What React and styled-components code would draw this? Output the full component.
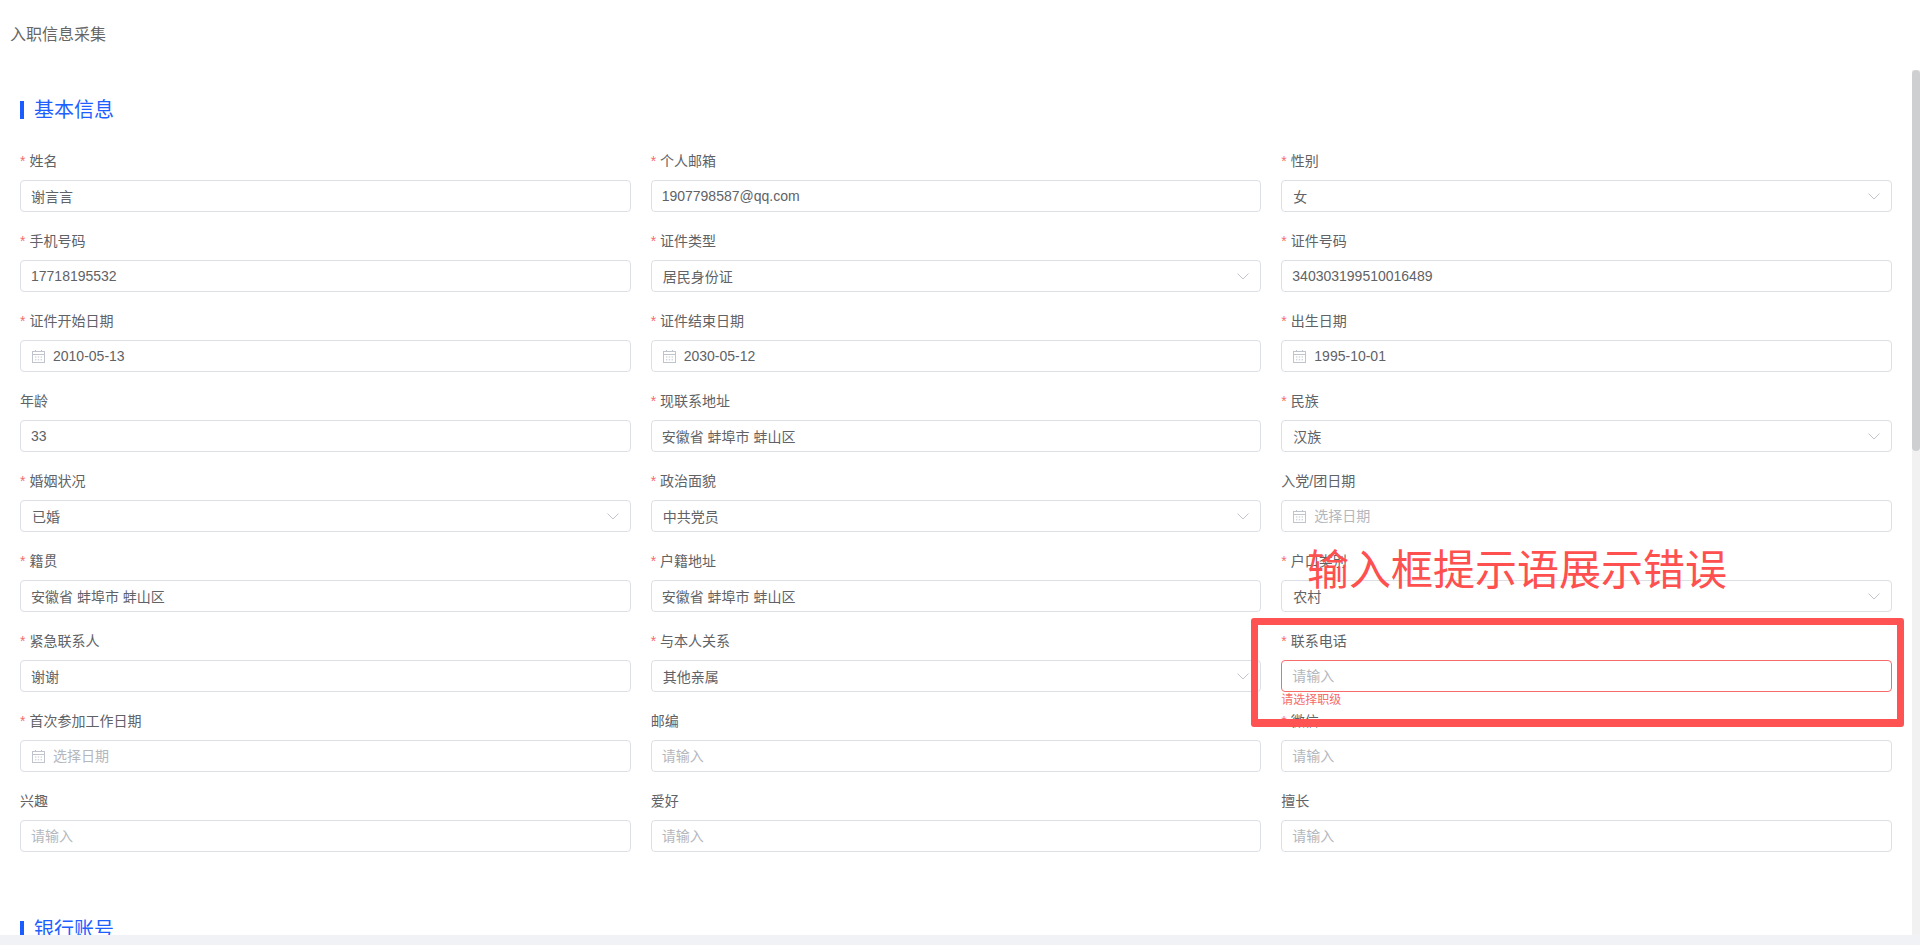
import React from 'react'
import styled, { createGlobalStyle } from 'styled-components'

const GlobalStyle = createGlobalStyle`
  html, body {
    margin: 0;
    padding: 0;
    height: 100%;
    overflow: hidden;
    background: #fff;
    font-family: "Liberation Sans", "Noto Sans CJK SC", sans-serif;
  }
  * { box-sizing: border-box; }
`

const basicRows = [
  { label: '姓名', required: true, value: '谢言言' },
  { label: '个人邮箱', required: true, value: '1907798587@qq.com' },
  { label: '性别', required: true, value: '女', type: 'select' },
  { label: '手机号码', required: true, value: '17718195532' },
  { label: '证件类型', required: true, value: '居民身份证', type: 'select' },
  { label: '证件号码', required: true, value: '340303199510016489' },
  { label: '证件开始日期', required: true, value: '2010-05-13', type: 'date' },
  { label: '证件结束日期', required: true, value: '2030-05-12', type: 'date' },
  { label: '出生日期', required: true, value: '1995-10-01', type: 'date' },
  { label: '年龄', value: '33' },
  { label: '现联系地址', required: true, value: '安徽省 蚌埠市 蚌山区' },
  { label: '民族', required: true, value: '汉族', type: 'select' },
  { label: '婚姻状况', required: true, value: '已婚', type: 'select' },
  { label: '政治面貌', required: true, value: '中共党员', type: 'select' },
  { label: '入党/团日期', type: 'date', placeholder: '选择日期' },
  { label: '籍贯', required: true, value: '安徽省 蚌埠市 蚌山区' },
  { label: '户籍地址', required: true, value: '安徽省 蚌埠市 蚌山区' },
  { label: '户口类别', required: true, value: '农村', type: 'select' },
  { label: '紧急联系人', required: true, value: '谢谢' },
  { label: '与本人关系', required: true, value: '其他亲属', type: 'select' },
  { label: '联系电话', required: true, placeholder: '请输入', error: '请选择职级' },
  { label: '首次参加工作日期', required: true, type: 'date', placeholder: '选择日期' },
  { label: '邮编', placeholder: '请输入' },
  { label: '微信', required: true, placeholder: '请输入' },
  { label: '兴趣', placeholder: '请输入' },
  { label: '爱好', placeholder: '请输入' },
  { label: '擅长', placeholder: '请输入' },
]

const CalendarIcon = () => (
  <CalendarSvg viewBox="0 0 13 13" fill="none" stroke="#c0c4cc" strokeWidth="1">
    <rect x="0.5" y="1.5" width="12" height="11" />
    <path d="M0.5 4.5h12M3.5 0v2M9.5 0v2" />
    <path d="M3 7h1.4M5.8 7h1.4M8.6 7h1.4M3 9.8h1.4M5.8 9.8h1.4M8.6 9.8h1.4" />
  </CalendarSvg>
)

const ChevronIcon = () => (
  <ChevronSvg viewBox="0 0 12 7" fill="none" stroke="#c0c4cc" strokeWidth="1">
    <path d="M0.5 0.5L6 6L11.5 0.5" />
  </ChevronSvg>
)

const Field = ({ label, required, value, placeholder, type, error }) => (
  <FieldWrap>
    <FieldLabel>
      {required && <Star>*</Star>}
      {label}
    </FieldLabel>
    <Control $error={!!error} $inset={type === 'date' || type === 'select'}>
      {type === 'date' && <CalendarIcon />}
      <ValueInput readOnly value={value || ''} placeholder={placeholder} />
      {type === 'select' && <ChevronIcon />}
    </Control>
    {error && <ErrorText>{error}</ErrorText>}
  </FieldWrap>
)

const App = () => {
  return (
    <Page>
      <GlobalStyle />
      <Header>入职信息采集</Header>
      <Body>
        <Main>
          <SectionTitle>基本信息</SectionTitle>
          <FormGrid>
            {basicRows.map((row) => (
              <Field key={row.label} {...row} />
            ))}
          </FormGrid>
          <SectionTitle $next>银行账号</SectionTitle>
        </Main>
        <ScrollTrack>
          <ScrollThumb />
        </ScrollTrack>
      </Body>
      <BottomBand />
      <ErrorFrame />
      <ErrorNote>输入框提示语展示错误</ErrorNote>
    </Page>
  )
}

export default App

const Page = styled.div`
  position: relative;
  display: flex;
  flex-direction: column;
  width: 1920px;
  height: 945px;
  overflow: hidden;
  background: #fff;
`

const Header = styled.div`
  flex: 0 0 70px;
  padding: 24px 0 0 10px;
  font-size: 16px;
  line-height: 22px;
  color: #666;
`

const Body = styled.div`
  flex: 0 0 865px;
  display: flex;
  overflow: hidden;
`

const Main = styled.main`
  flex: 1;
  min-width: 0;
  padding: 26px 20px 0 20px;
  overflow: hidden;
`

const SectionTitle = styled.h2`
  display: flex;
  align-items: center;
  gap: 10px;
  height: 28px;
  margin: ${(p) => (p.$next ? '64px 0 0' : '0 0 26px')};
  font-size: 20px;
  font-weight: 400;
  line-height: 28px;
  color: #1d5fff;

  &::before {
    content: '';
    width: 4px;
    height: 18px;
    background: #1a5cff;
  }
`

const FormGrid = styled.div`
  display: grid;
  grid-template-columns: repeat(3, 1fr);
  column-gap: 20px;
  row-gap: 18px;
`

const FieldWrap = styled.div`
  position: relative;
`

const FieldLabel = styled.label`
  display: block;
  height: 22px;
  margin-bottom: 8px;
  font-size: 14px;
  line-height: 22px;
  color: #606266;
`

const Star = styled.span`
  margin-right: 4px;
  color: #f56c6c;
`

const Control = styled.div`
  display: flex;
  align-items: center;
  height: 32px;
  padding: ${(p) => (p.$inset ? '0 12px 0 11px' : '0 12px 0 10px')};
  background: #fff;
  border: 1px solid ${(p) => (p.$error ? '#f56c6c' : '#dcdfe6')};
  border-radius: 4px;
`

const ValueInput = styled.input`
  flex: 1;
  min-width: 0;
  padding: 0;
  border: 0;
  outline: 0;
  background: transparent;
  font-family: inherit;
  font-size: 14px;
  color: #606266;

  &::placeholder {
    color: #b4b7bd;
    opacity: 1;
  }
`

const CalendarSvg = styled.svg`
  flex: none;
  width: 13px;
  height: 13px;
  margin-right: 8px;
`

const ChevronSvg = styled.svg`
  flex: none;
  width: 12px;
  height: 7px;
  margin-left: 8px;
  margin-right: -1px;
`

const ErrorText = styled.div`
  position: absolute;
  left: 0;
  top: 62px;
  font-size: 12px;
  line-height: 16px;
  color: #f56c6c;
`

const ScrollTrack = styled.div`
  flex: 0 0 8px;
  background: #f1f1f1;
`

const ScrollThumb = styled.div`
  height: 381px;
  background: #cdcfd1;
  border-radius: 4px;
`

const BottomBand = styled.div`
  flex: 0 0 10px;
  background: #f0f2f5;
`

const ErrorFrame = styled.div`
  position: absolute;
  left: 1251px;
  top: 618px;
  width: 653px;
  height: 109px;
  border: 7px solid #ff5252;
  border-bottom-width: 8px;
  border-radius: 3px;
`

const ErrorNote = styled.div`
  position: absolute;
  left: 1307px;
  top: 542px;
  font-size: 42px;
  line-height: 58px;
  white-space: nowrap;
  color: #ff5050;
`
